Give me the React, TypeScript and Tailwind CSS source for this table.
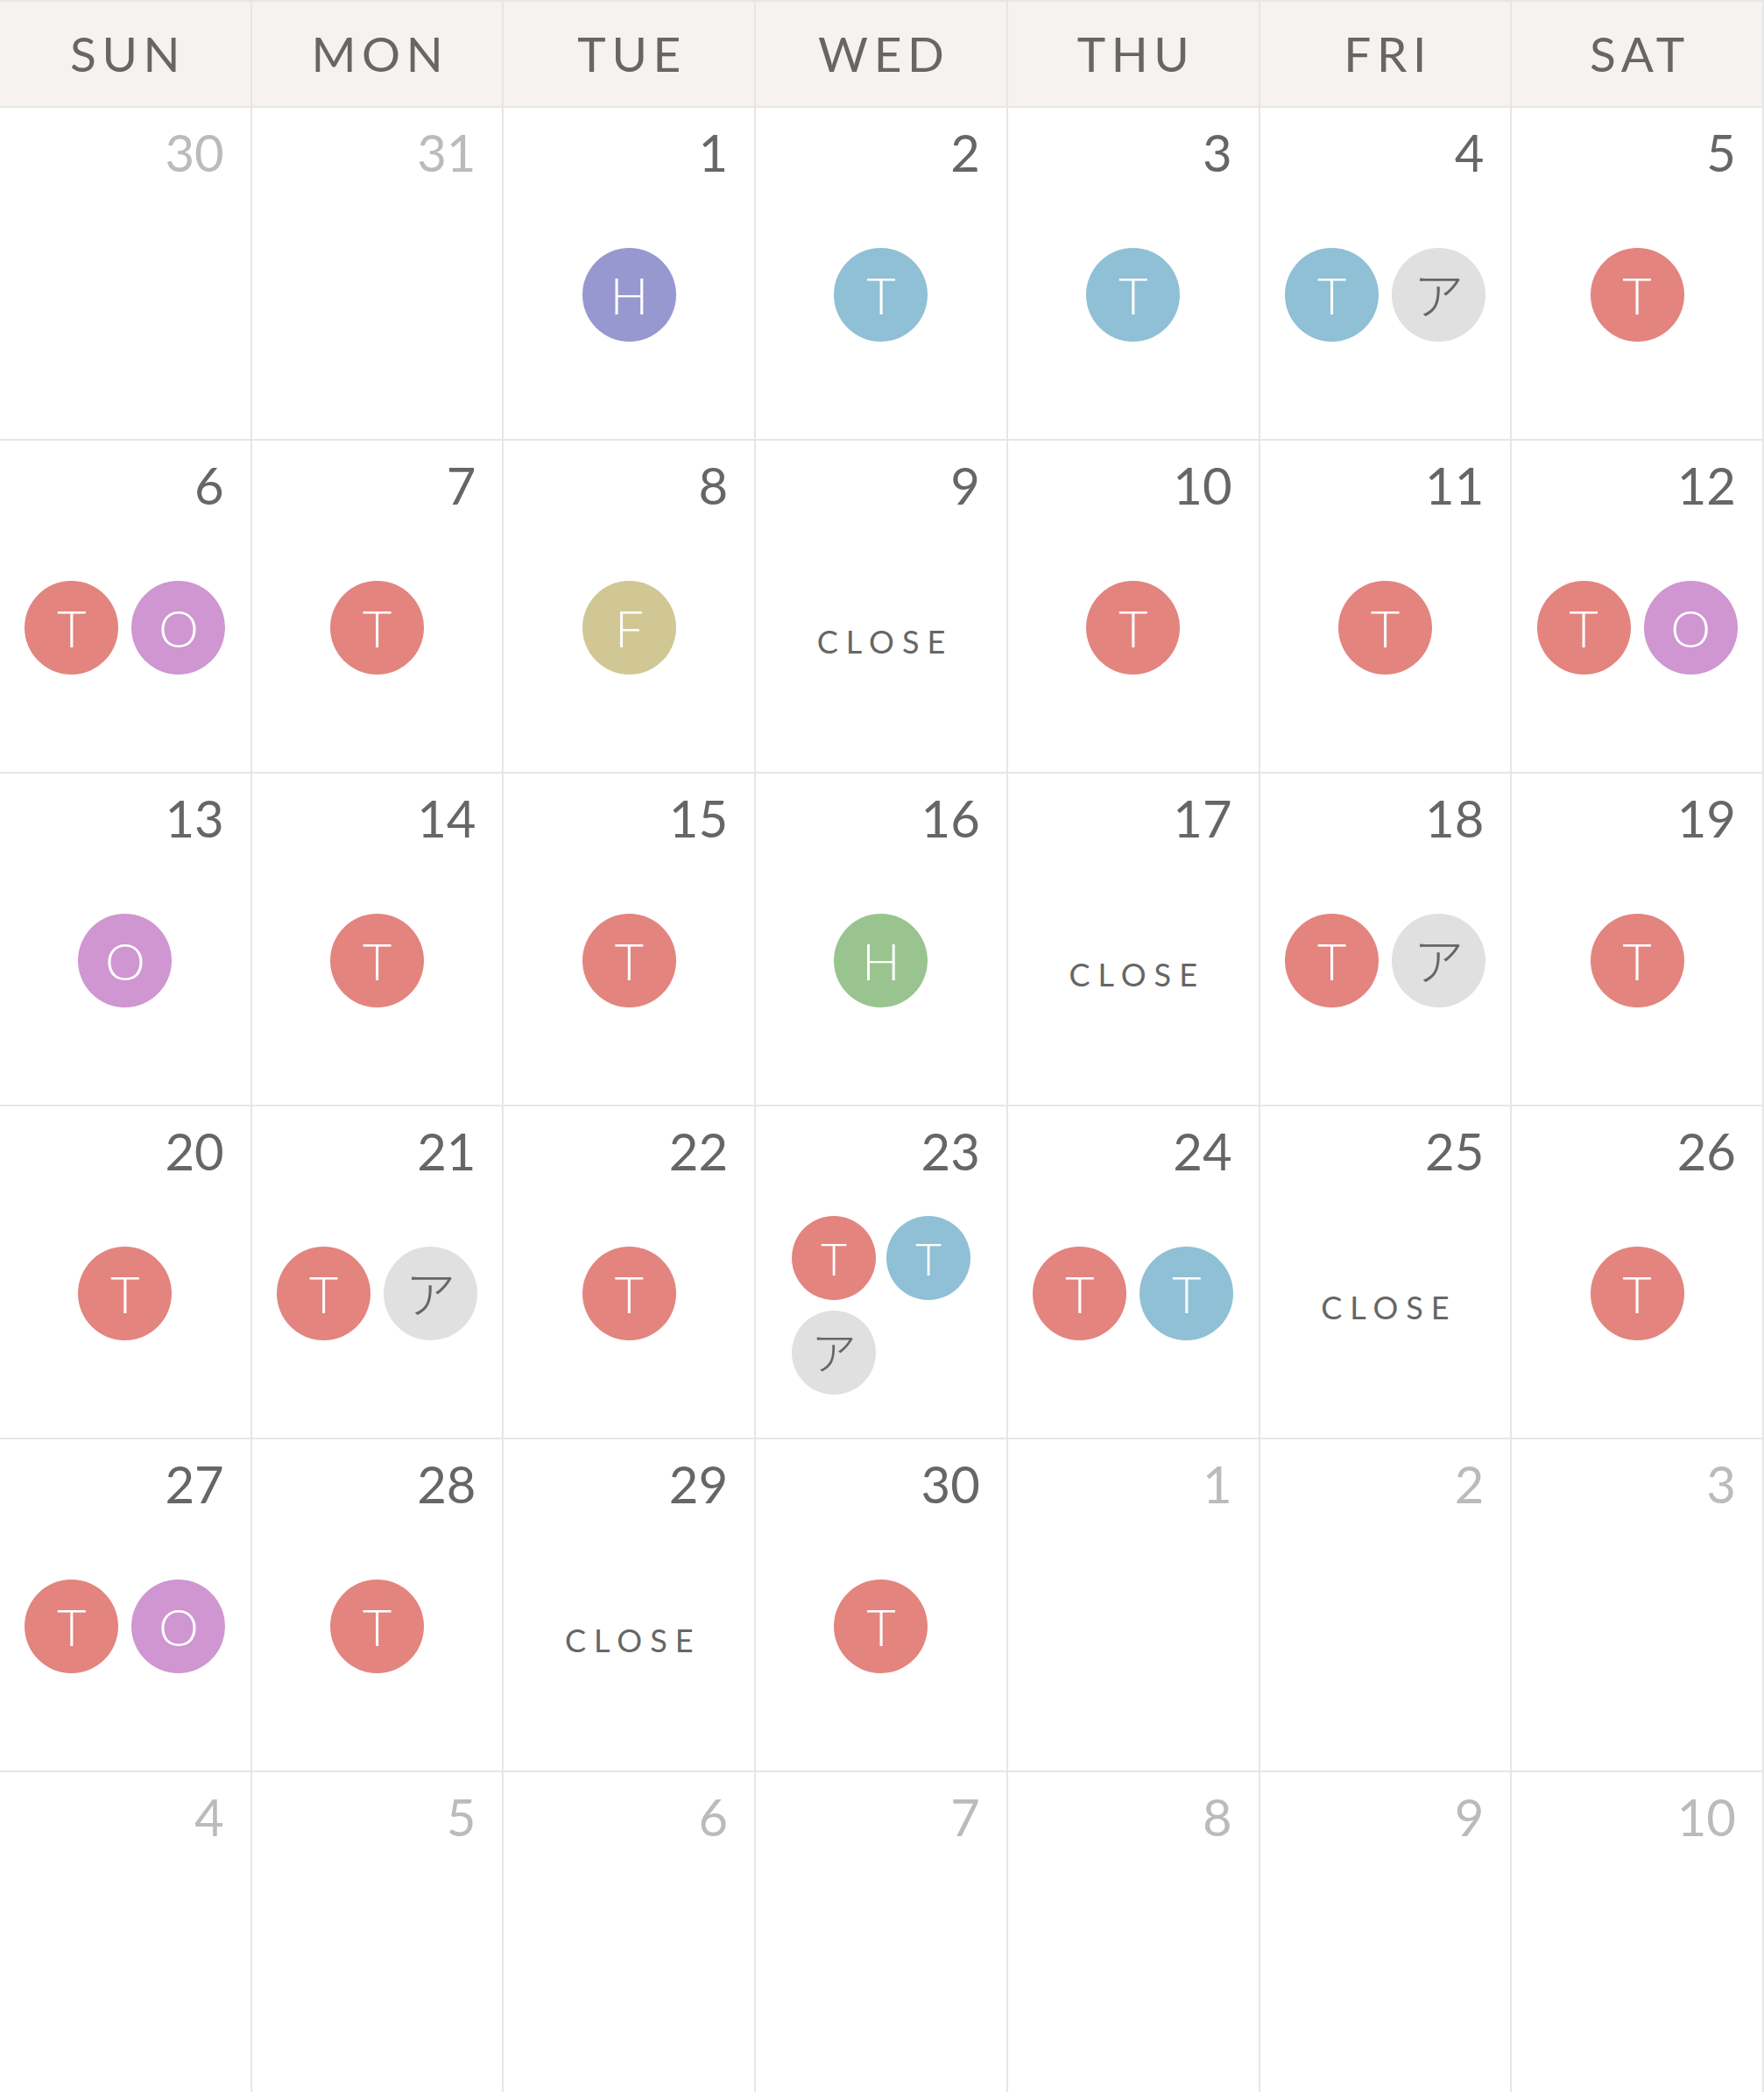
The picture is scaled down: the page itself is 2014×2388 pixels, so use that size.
import React from "react";

type Mark = "tr" | "tb" | "a" | "hp" | "hg" | "f" | "o";

type Day = {
  n: number;
  muted?: boolean;
  marks?: Mark[];
  close?: boolean;
};

const markStyle: Record<Mark, { label: string; cls: string }> = {
  tr: { label: "T", cls: "bg-[#e3847f] text-white" },
  tb: { label: "T", cls: "bg-[#8fc0d5] text-white" },
  a: { label: "ア", cls: "bg-[#e0e0e0] text-[#666666] text-[48px]" },
  hp: { label: "H", cls: "bg-[#9898d0] text-white" },
  hg: { label: "H", cls: "bg-[#9ac48f] text-white" },
  f: { label: "F", cls: "bg-[#d1c794] text-white" },
  o: { label: "O", cls: "bg-[#cf96d1] text-white" },
};

const weekdays = ["SUN", "MON", "TUE", "WED", "THU", "FRI", "SAT"];

const weeks: Day[][] = [
  [
    { n: 30, muted: true },
    { n: 31, muted: true },
    { n: 1, marks: ["hp"] },
    { n: 2, marks: ["tb"] },
    { n: 3, marks: ["tb"] },
    { n: 4, marks: ["tb", "a"] },
    { n: 5, marks: ["tr"] },
  ],
  [
    { n: 6, marks: ["tr", "o"] },
    { n: 7, marks: ["tr"] },
    { n: 8, marks: ["f"] },
    { n: 9, close: true },
    { n: 10, marks: ["tr"] },
    { n: 11, marks: ["tr"] },
    { n: 12, marks: ["tr", "o"] },
  ],
  [
    { n: 13, marks: ["o"] },
    { n: 14, marks: ["tr"] },
    { n: 15, marks: ["tr"] },
    { n: 16, marks: ["hg"] },
    { n: 17, close: true },
    { n: 18, marks: ["tr", "a"] },
    { n: 19, marks: ["tr"] },
  ],
  [
    { n: 20, marks: ["tr"] },
    { n: 21, marks: ["tr", "a"] },
    { n: 22, marks: ["tr"] },
    { n: 23, marks: ["tr", "tb", "a"] },
    { n: 24, marks: ["tr", "tb"] },
    { n: 25, close: true },
    { n: 26, marks: ["tr"] },
  ],
  [
    { n: 27, marks: ["tr", "o"] },
    { n: 28, marks: ["tr"] },
    { n: 29, close: true },
    { n: 30, marks: ["tr"] },
    { n: 1, muted: true },
    { n: 2, muted: true },
    { n: 3, muted: true },
  ],
  [
    { n: 4, muted: true },
    { n: 5, muted: true },
    { n: 6, muted: true },
    { n: 7, muted: true },
    { n: 8, muted: true },
    { n: 9, muted: true },
    { n: 10, muted: true },
  ],
];

function Badge({ mark, small }: { mark: Mark; small?: boolean }) {
  const m = markStyle[mark];
  return (
    <div
      className={`flex items-center justify-center rounded-full font-light leading-none ${
        small ? "h-[96px] w-[96px] text-[52px]" : "h-[107px] w-[107px] text-[58px]"
      } ${m.cls}`}
    >
      {m.label}
    </div>
  );
}

function DayCell({ day }: { day: Day }) {
  const marks = day.marks ?? [];
  return (
    <div className="flex h-[380px] flex-col border-r-2 border-b-2 border-[#e6e6e6] bg-white">
      <div
        className={`pt-[22px] pr-[30px] text-right text-[58px] leading-none ${
          day.muted ? "text-[#bbbbbb]" : "text-[#666666]"
        }`}
      >
        {day.n}
      </div>
      {day.close && (
        <div className="mt-[131px] pl-[0.25em] text-center text-[36px] leading-none tracking-[0.25em] text-[#666666]">
          CLOSE
        </div>
      )}
      {marks.length > 0 && marks.length < 3 && (
        <div className="mt-[80px] flex justify-center gap-[15px]">
          {marks.map((m, i) => (
            <Badge key={i} mark={m} />
          ))}
        </div>
      )}
      {marks.length >= 3 && (
        <div className="mx-auto mt-[45px] grid grid-cols-[96px_96px] gap-[12px]">
          {marks.map((m, i) => (
            <Badge key={i} mark={m} small />
          ))}
        </div>
      )}
    </div>
  );
}

export default function App() {
  return (
    <div
      className="min-h-screen w-full bg-white"
      style={{ fontFamily: "Lato, 'Noto Sans CJK JP', sans-serif" }}
    >
      <div className="grid grid-cols-7 border-t-2 border-b-2 border-[#e6e6e6] bg-[#f5f2ef]">
        {weekdays.map((w) => (
          <div
            key={w}
            className="flex h-[119px] items-center justify-center border-r-2 border-[#e6e6e6] pl-[0.12em] text-[55px] leading-none tracking-[0.12em] text-[#666666]"
          >
            {w}
          </div>
        ))}
      </div>
      <div className="grid grid-cols-7">
        {weeks.flat().map((d, i) => (
          <DayCell key={i} day={d} />
        ))}
      </div>
    </div>
  );
}
